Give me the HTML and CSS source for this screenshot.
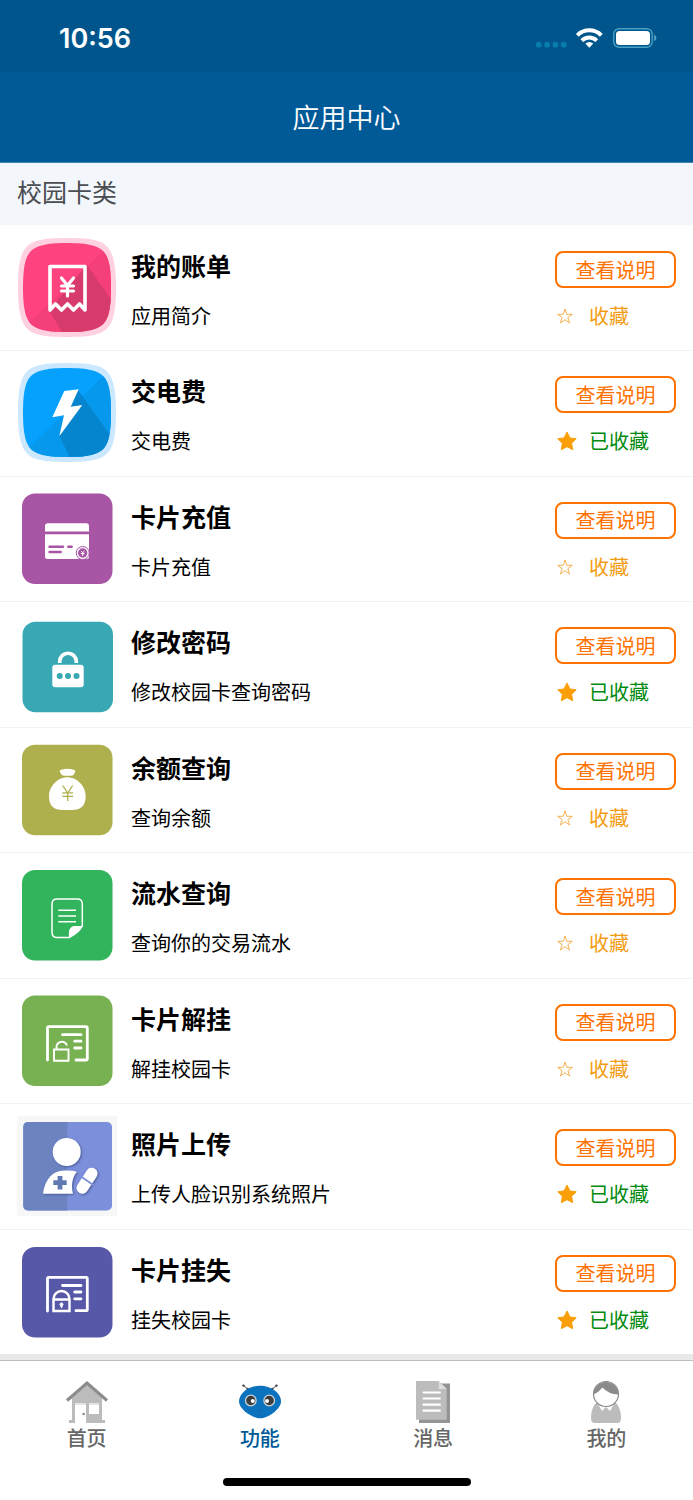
FILE: index.html
```
<!DOCTYPE html>
<html lang="zh-CN">
<head>
<meta charset="utf-8">
<meta name="viewport" content="width=device-width, initial-scale=1">
<title>应用中心</title>
<link rel="stylesheet" href="styles.css">
</head>
<body>
<svg class="defs" aria-hidden="true">
  <symbol id="star-on" viewBox="0 0 20 20"><path d="M10 1l2.900 5.900 6.300.9-4.600 4.500 1.100 6.400L10 15.700l-5.700 3 1.100-6.400L.8 7.800l6.300-.9z" fill="#fa9f08" stroke="#fa9f08" stroke-linejoin="round"/></symbol>
  <symbol id="star-off" viewBox="0 0 20 20"><path d="M8 3l1.800 5.300h5.600l-4.500 3.300 1.700 5.400L8 13.700 3.400 17l1.700-5.400L.6 8.300h5.600z" fill="none" stroke="#f5b254" stroke-width="1"/></symbol>
</svg>
<div class="app">
  <header class="top">
    <div class="status">
      <time class="clock">10:56</time>
      <svg class="status-icons" viewBox="0 0 122 20" aria-hidden="true">
        <g fill="#087db0"><rect x="1" y="14" width="5.500" height="5.500" rx="2"/><rect x="9.300" y="14" width="5.500" height="5.500" rx="2"/><rect x="17.700" y="14" width="5.500" height="5.500" rx="2"/><rect x="26" y="14" width="5.500" height="5.500" rx="2"/></g>
        <g fill="none" stroke="#fff" stroke-width="4"><path d="M42.300 7.300a17 17 0 0 1 24 0"/><path d="M46.800 12.600a10.600 10.600 0 0 1 15 0"/></g>
        <path d="M54.300 19.800l-4-4.200a6 6 0 0 1 8 0z" fill="#fff"/>
        <rect x="78.700" y=".7" width="38.500" height="18.600" rx="5.500" fill="none" stroke="#4b9fc4" stroke-width="1.400"/>
        <rect x="81" y="3" width="34" height="14" rx="3.500" fill="#fff"/>
        <path d="M119 6.800q2.500 1 2.500 3.200t-2.500 3.200z" fill="#4b9fc4"/>
      </svg>
    </div>
    <h1 class="title">应用中心</h1>
  </header>
  <main class="main">
    <h2 class="category">校园卡类</h2>
    <ul class="list">
      <li class="row">
        <svg class="icon" viewBox="0 0 100 100" aria-hidden="true">
          <path d="M50 0C76 0 85 3 90 8.500S99 23 99 49.500 95.500 85 90 90.500 76 99 50 99 15 96 10 90.500 1 76 1 49.500 4.500 14 10 8.500 24 0 50 0z" fill="#ffd0e0"/>
          <clipPath id="tile-clip"><path d="M50 5C72 5 81 8 86 13S94 27 94 49.500 91 81 86 86 72 94 50 94 19 91 14 86 6 72 6 49.500 9 18 14 13 28 5 50 5z"/></clipPath>
          <g clip-path="url(#tile-clip)"><path d="M0 0h100v100H0z" fill="#ff437f"/><path d="M100 0v100H0v-4z" fill="#f53f78"/><path d="M70 27l26 37v32H46L32 72z" fill="#d63b6b"/></g>
          <g fill="none" stroke="#fff" stroke-width="3.600" stroke-linejoin="round" stroke-linecap="round"><path d="M33 72V28.500h35V72l-5.500-6-6 6-6-6-6 6-6-6z"/><path d="M44.500 40l6 7.500 6-7.500M50.500 48v10M44.500 48h12M44.500 53h12" stroke-width="3.200"/></g>
        </svg>
        <div class="info"><h3 class="name">我的账单</h3><p class="desc">应用简介</p></div>
        <div class="actions"><button class="help" type="button">查看说明</button><button class="fav" type="button"><svg class="star" aria-hidden="true"><use href="#star-off"/></svg>收藏</button></div>
      </li>
      <li class="row">
        <svg class="icon" viewBox="0 0 100 100" aria-hidden="true">
          <path d="M50 0C76 0 85 3 90 8.500S99 23 99 49.500 95.500 85 90 90.500 76 99 50 99 15 96 10 90.500 1 76 1 49.500 4.500 14 10 8.500 24 0 50 0z" fill="#cbe8ff"/>
          <g clip-path="url(#tile-clip)"><path d="M0 0h100v100H0z" fill="#06a0fd"/><path d="M100 0v100H0v-4z" fill="#0698ec"/><path d="M61 27l34 48v22H54L42 72z" fill="#0685cf"/></g>
          <path d="M47.300 28l14.400-1.700-8 17.400 11.600-1.700-23 31.300L47 52.300l-11.700 2z" fill="#fff"/>
        </svg>
        <div class="info"><h3 class="name">交电费</h3><p class="desc">交电费</p></div>
        <div class="actions"><button class="help" type="button">查看说明</button><button class="fav fav-on" type="button"><svg class="star" aria-hidden="true"><use href="#star-on"/></svg>已收藏</button></div>
      </li>
      <li class="row">
        <svg class="icon" viewBox="0 0 100 100" aria-hidden="true">
          <rect x="5" y="4.500" width="90.500" height="90.500" rx="13" fill="#a855a5"/>
          <path d="M28 42.500V37q0-2.700 2.700-2.700h38.600q2.700 0 2.700 2.700v5.500zM28 45.300h44V67.500q0 2.500-2.500 2.500h-39Q28 70 28 67.500z" fill="#fff"/>
          <path d="M32.500 57.700h13.500M51.300 57.700h3.400M32.500 63h11.200" stroke="#a855a5" stroke-width="2.400" stroke-linecap="round"/>
          <circle cx="65.700" cy="64" r="6.500" fill="#fff" stroke="#a855a5"/><circle cx="65.700" cy="64" r="4.700" fill="#a855a5"/>
          <path d="M64 62l1.700 1.700 1.700-1.700M65.700 63.500v3.500M63.900 64.500h3.600" fill="none" stroke="#fff"/>
        </svg>
        <div class="info"><h3 class="name">卡片充值</h3><p class="desc">卡片充值</p></div>
        <div class="actions"><button class="help" type="button">查看说明</button><button class="fav" type="button"><svg class="star" aria-hidden="true"><use href="#star-off"/></svg>收藏</button></div>
      </li>
      <li class="row">
        <svg class="icon" viewBox="0 0 100 100" aria-hidden="true">
          <rect x="5.500" y="7.700" width="90.500" height="90.500" rx="13" fill="#39a8b5"/>
          <rect x="35.300" y="50.700" width="31.400" height="22.600" rx="3" fill="#fff"/>
          <path d="M42.700 49v-1.500a8.300 8.300 0 0 1 16.600 0V49" fill="none" stroke="#fff" stroke-width="3.600"/>
          <g fill="#39a8b5"><circle cx="42.700" cy="62" r="3"/><circle cx="51" cy="62" r="3"/><circle cx="59.500" cy="62" r="3"/></g>
        </svg>
        <div class="info"><h3 class="name">修改密码</h3><p class="desc">修改校园卡查询密码</p></div>
        <div class="actions"><button class="help" type="button">查看说明</button><button class="fav fav-on" type="button"><svg class="star" aria-hidden="true"><use href="#star-on"/></svg>已收藏</button></div>
      </li>
      <li class="row">
        <svg class="icon" viewBox="0 0 100 100" aria-hidden="true">
          <rect x="5" y="4.700" width="90.500" height="90.500" rx="13" fill="#aeb04e"/>
          <path d="M43 32q-1-2 1.500-2.300 6-1.700 12 0 2.500.3 1.300 2.800-1.200 3.200-3.600 3.200h-7Q44.500 35.700 43 32zM50.300 37.300C60 37.300 68.700 46 68.700 56.500 68.700 66 63.500 70 55 70h-9.500C37 70 32 66 32 56.500 32 46 41 37.300 50.300 37.300z" fill="#fff"/>
          <path d="M45.700 45.500l5 7.500 5-7.500M50.700 53v8M45.300 52.800h10.800M45.300 56.400h10.800" fill="none" stroke="#aeb04e" stroke-width="1.300"/>
        </svg>
        <div class="info"><h3 class="name">余额查询</h3><p class="desc">查询余额</p></div>
        <div class="actions"><button class="help" type="button">查看说明</button><button class="fav" type="button"><svg class="star" aria-hidden="true"><use href="#star-off"/></svg>收藏</button></div>
      </li>
      <li class="row">
        <svg class="icon" viewBox="0 0 100 100" aria-hidden="true">
          <rect x="5" y="5" width="90.500" height="90.500" rx="13" fill="#31b45b"/>
          <path d="M65.300 61V39q0-5-5-5H40q-5 0-5 5v28.500q0 5 5 5h12.500z" fill="none" stroke="#fff" stroke-width="1.500"/>
          <path d="M52 73q-1.200-11 4.500-12h9.500q-4 8-14 12z" fill="#fff"/>
          <path d="M41.300 45.200H59M41.300 50.900H59M41.300 56.700H59" stroke="#fff" stroke-width="1.500"/>
        </svg>
        <div class="info"><h3 class="name">流水查询</h3><p class="desc">查询你的交易流水</p></div>
        <div class="actions"><button class="help" type="button">查看说明</button><button class="fav" type="button"><svg class="star" aria-hidden="true"><use href="#star-off"/></svg>收藏</button></div>
      </li>
      <li class="row">
        <svg class="icon" viewBox="0 0 100 100" aria-hidden="true">
          <rect x="5" y="4.500" width="90.500" height="90.500" rx="13" fill="#78b152"/>
          <g fill="none" stroke="#fff" stroke-width="2.800" stroke-linecap="round"><path d="M30.500 69V37q0-1.300 1.300-1.300H69q1.300 0 1.300 1.300v30.700q0 1.300-1.300 1.300H59"/><path d="M45.500 43.700h18.500M57.700 50.200H64M57.700 57H64"/><path d="M37 58.500h14.500v11.300H37zM39.500 58v-2a5.400 5.400 0 0 1 10.200-2.200" stroke-width="1.900"/></g>
        </svg>
        <div class="info"><h3 class="name">卡片解挂</h3><p class="desc">解挂校园卡</p></div>
        <div class="actions"><button class="help" type="button">查看说明</button><button class="fav" type="button"><svg class="star" aria-hidden="true"><use href="#star-off"/></svg>收藏</button></div>
      </li>
      <li class="row">
        <svg class="icon" viewBox="0 0 100 100" aria-hidden="true">
          <path d="M0 0h100v100H0z" fill="#f7f7f7"/>
          <rect x="6.300" y="6" width="88.700" height="88.500" rx="5" fill="#7c8fda"/>
          <path d="M50.300 6v88.500h-39q-5 0-5-5V11q0-5 5-5z" fill="#6c83c1"/>
          <g class="photo-figure"><circle cx="49.700" cy="36" r="14" fill="#fff"/>
          <path d="M26 77.700C28 63 36 54.500 47 54.500q8-.5 13 1.200c-5 6-6 14-4 22z" fill="#fff"/>
          <path d="M65.300 72L74.800 57.500" stroke="#fff" stroke-width="11.500" stroke-linecap="round"/></g>
          <path d="M64 60.500l13 9" stroke="#7c8fda" stroke-width="1.800"/>
          <path d="M43 60v13.400M36.300 66.700h13.400" stroke="#6179b2" stroke-width="4.800"/>
        </svg>
        <div class="info"><h3 class="name">照片上传</h3><p class="desc">上传人脸识别系统照片</p></div>
        <div class="actions"><button class="help" type="button">查看说明</button><button class="fav fav-on" type="button"><svg class="star" aria-hidden="true"><use href="#star-on"/></svg>已收藏</button></div>
      </li>
      <li class="row">
        <svg class="icon" viewBox="0 0 100 100" aria-hidden="true">
          <rect x="5" y="5" width="90.500" height="90.500" rx="13" fill="#5858a8"/>
          <g fill="none" stroke="#fff" stroke-width="2.800" stroke-linecap="round"><path d="M30.500 69V36.700q0-1.300 1.300-1.300H69q1.300 0 1.300 1.300v30.700q0 1.300-1.300 1.300H59"/><path d="M45.500 43.500h18.500M57.700 50H64M57.700 56.800H64"/><path d="M36.500 57.500v11.500h16V57.500zV57a8 8 0 0 1 16 0v.5" stroke-width="2.400"/></g>
          <path d="M44.500 66l-1-2.500a1.500 1.500 0 1 1 2 0z" fill="#fff" stroke="#fff"/>
        </svg>
        <div class="info"><h3 class="name">卡片挂失</h3><p class="desc">挂失校园卡</p></div>
        <div class="actions"><button class="help" type="button">查看说明</button><button class="fav fav-on" type="button"><svg class="star" aria-hidden="true"><use href="#star-on"/></svg>已收藏</button></div>
      </li>
    </ul>
  </main>
  <footer class="bottom">
    <nav class="tabs">
      <a class="tab" href="#home">
        <svg class="tab-icon" viewBox="0 0 42 42" aria-hidden="true">
          <path d="M21 3l15 14v22h3v3H20V22H9v20H3v-3h3V17z" fill="#bcbcbc"/><path d="M23 22h10v11H23z" fill="#fff"/><path d="M9 22h11v2H9zM23 22h10v2H23z" fill="#e4e4e4"/>
          <path d="M1 19.500L21 2l20 17.500" fill="none" stroke="#8b8b8b" stroke-width="3"/><circle cx="17.600" cy="33" r="1.300" fill="#888"/>
        </svg>首页</a>
      <a class="tab tab-active" href="#apps" aria-current="page">
        <svg class="tab-icon" viewBox="0 0 42 42" aria-hidden="true">
          <path d="M4.500 4.500L9 8.300M37.500 4.500L33 8.300" stroke="#444" stroke-width="1"/><g fill="#444"><circle cx="4.500" cy="4.600" r="1.200"/><circle cx="37.500" cy="4.600" r="1.200"/><circle cx="8.700" cy="8" r="1.200"/><circle cx="33.300" cy="8" r="1.200"/></g>
          <path d="M21 4.800C32 4.800 42 12 42 20.500 42 28 29 37.300 21 37.300S0 28 0 20.500C0 12 10 4.800 21 4.800z" fill="#0b72bd"/>
          <g stroke="#c9d3da" stroke-width="1.300" fill="#3d3d3d"><circle cx="11.800" cy="19.500" r="5.300"/><circle cx="30.200" cy="19.500" r="5.300"/></g>
          <circle cx="13.800" cy="20" r="2" fill="#fff"/><circle cx="28" cy="20" r="2" fill="#fff"/><path d="M20 29.500q1 .8 2 0" fill="none" stroke="#24578a"/>
        </svg>功能</a>
      <a class="tab" href="#messages">
        <svg class="tab-icon" viewBox="0 0 42 42" aria-hidden="true">
          <path d="M7 2.500h31V42H7z" fill="#949494"/><path d="M4 0h22.700l8 8v30.700H4z" fill="#bcbcbc"/><path d="M26.700 0l8 8h-8z" fill="#dedede"/>
          <path d="M10.700 11.500h18M10.700 17.500h18M10.700 23.700h18M10.700 29.700h18" stroke="#fff" stroke-width="2.200"/>
        </svg>消息</a>
      <a class="tab" href="#me">
        <svg class="tab-icon" viewBox="0 0 42 42" aria-hidden="true">
          <path d="M11 22h20q5 5 5 15.500Q36 42 32 42H10q-4 0-4-4.500Q6 27 11 22z" fill="#bcbcbc"/><path d="M13.500 24l3.500 6 4-4 4 4 3.500-6z" fill="#fff"/>
          <circle cx="21" cy="13" r="12.500" fill="#fff" stroke="#8b8b8b" stroke-width="1.200"/><path d="M8.500 13.500A12.500 12.500 0 1 1 33.500 13.500Q23 13 17.500 6.500 14 11 8.500 13.500z" fill="#8b8b8b"/>
        </svg>我的</a>
    </nav>
    <div class="home-bar"></div>
  </footer>
</div>
</body>
</html>
```
FILE: styles.css
```
* { box-sizing: border-box; }
body {
  margin: 0;
  background: #fff;
  color: #000;
  font-family: "Noto Sans CJK SC", sans-serif;
  font-size: 20px;
}
h1, h2, h3, p, ul { margin: 0; padding: 0; font-weight: 400; }
button { margin: 0; padding: 0; background: none; border: 0; font: inherit; cursor: pointer; }
.defs { display: none; }
.app { display: flex; flex-direction: column; min-height: 100vh; }

.top { background: #005a98; border-bottom: 1px solid #3d86ad; color: #fff; }
.status {
  display: flex;
  align-items: center;
  justify-content: space-between;
  height: 72px;
  padding: 4px 36px 0 59px;
  background: #00568c;
}
.clock { font-family: Inter, sans-serif; font-size: 27px; font-weight: 600; }
.status-icons { width: 122px; height: 20px; }
.title { padding: 25px 0; font-size: 27px; font-weight: 350; line-height: 40px; text-align: center; }

.main { display: flex; flex: 1; flex-direction: column; }
.category { padding: 10px 17px 16px; background: #f3f7fb; color: #4a4d52; font-size: 25px; line-height: 36px; }
.list { display: grid; flex: 1; grid-auto-rows: 1fr; list-style: none; }
.row { display: flex; padding: 12px 17px 11px; border-top: 1px solid #f0f3f5; }
.row:first-child { border-top-color: transparent; }
.icon { flex: none; width: 100px; height: 100px; }
.info { flex: 1; padding-left: 14px; }
.name { padding-top: 9px; font-size: 25px; font-weight: 700; line-height: 36px; }
.desc { padding-top: 18px; line-height: 30px; }
.actions { display: flex; flex-direction: column; width: 121px; padding-top: 13px; }
.help {
  height: 37px;
  border: 2px solid #ff7200;
  border-radius: 8px;
  color: #ff7200;
  line-height: 30px;
}
.fav { display: flex; align-items: center; gap: 12px; margin-top: 13px; padding-left: 2px; color: #f39c12; line-height: 30px; }
.fav-on { color: #008a0e; }
.star { width: 20px; height: 20px; }
.photo-figure { filter: drop-shadow(1px 1px 1px #4a5c9a); }

.bottom { border-top: 6px solid #e9e9e9; }
.tabs { display: grid; grid-template-columns: repeat(4, 1fr); padding-top: 20px; border-top: 1px solid #bdbdbd; }
.tab { display: flex; flex-direction: column; align-items: center; color: #666; font-weight: 500; line-height: 30px; text-decoration: none; }
.tab-active { color: #005a98; }
.tab-icon { width: 42px; height: 42px; }
.home-bar { width: 248px; height: 8px; margin: 25px auto 14px; border-radius: 4px; background: #000; }
```
